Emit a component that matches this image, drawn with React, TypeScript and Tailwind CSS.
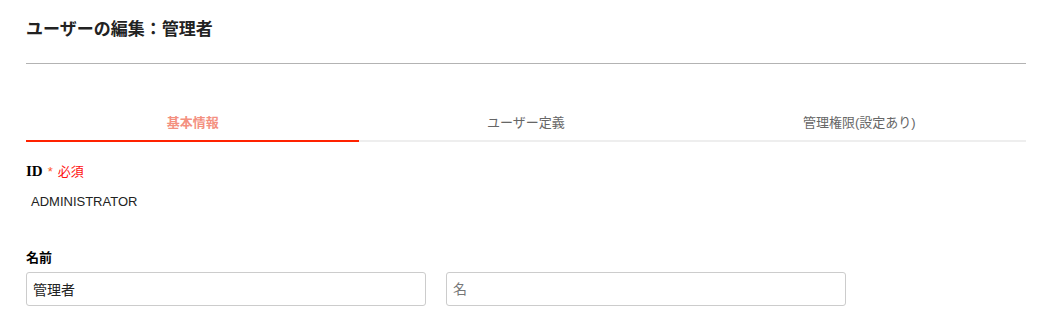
export default function App() {
  const tabs = ["基本情報", "ユーザー定義", "管理権限(設定あり)"];
  const active = 0;

  return (
    <div className="w-[1052px] h-[326px] bg-white px-[26px] font-['Liberation_Sans','Noto_Sans_CJK_JP',sans-serif] text-[#333]">
      {/* header */}
      <div className="pt-[19px] pb-[22px] border-b border-[#b3b3b3]">
        <h1 className="text-[17px] leading-[22px] font-bold text-[#222]">ユーザーの編集：管理者</h1>
      </div>

      {/* tabs */}
      <div className="mt-[49px] flex border-b-2 border-[#eeeeee]">
        {tabs.map((t, i) => (
          <div
            key={t}
            className={
              i === active
                ? "flex-1 text-center text-[13px] font-bold text-[#f4907f] pb-[7px] -mb-[2px] border-b-2 border-[#ff2200]"
                : "flex-1 text-center text-[13px] text-[#666] pb-[7px]"
            }
          >
            {t}
          </div>
        ))}
      </div>

      {/* ID */}
      <div className="mt-[20px] flex items-baseline gap-[5px] text-[13px] leading-[18px]">
        <span className="font-bold text-[15px] text-black font-['Liberation_Serif',serif]">ID</span>
        <span className="text-[#ff5a1f]">*</span>
        <span className="text-[#ff1010]">必須</span>
      </div>
      <div className="mt-[13px] pl-[5px] text-[13px] leading-[16px] text-[#222]">ADMINISTRATOR</div>

      {/* name */}
      <div className="mt-[40px] text-[13px] leading-[16px] font-bold text-black">名前</div>
      <div className="mt-[6px] flex gap-[20px]">
        <input
          defaultValue="管理者"
          className="w-[400px] h-[34px] border border-[#cccccc] rounded-[3px] px-[6px] text-[14px] text-[#222] outline-none"
        />
        <input
          placeholder="名"
          className="w-[400px] h-[34px] border border-[#cccccc] rounded-[3px] px-[6px] text-[14px] text-[#222] placeholder:text-[#777] outline-none"
        />
      </div>
    </div>
  );
}
